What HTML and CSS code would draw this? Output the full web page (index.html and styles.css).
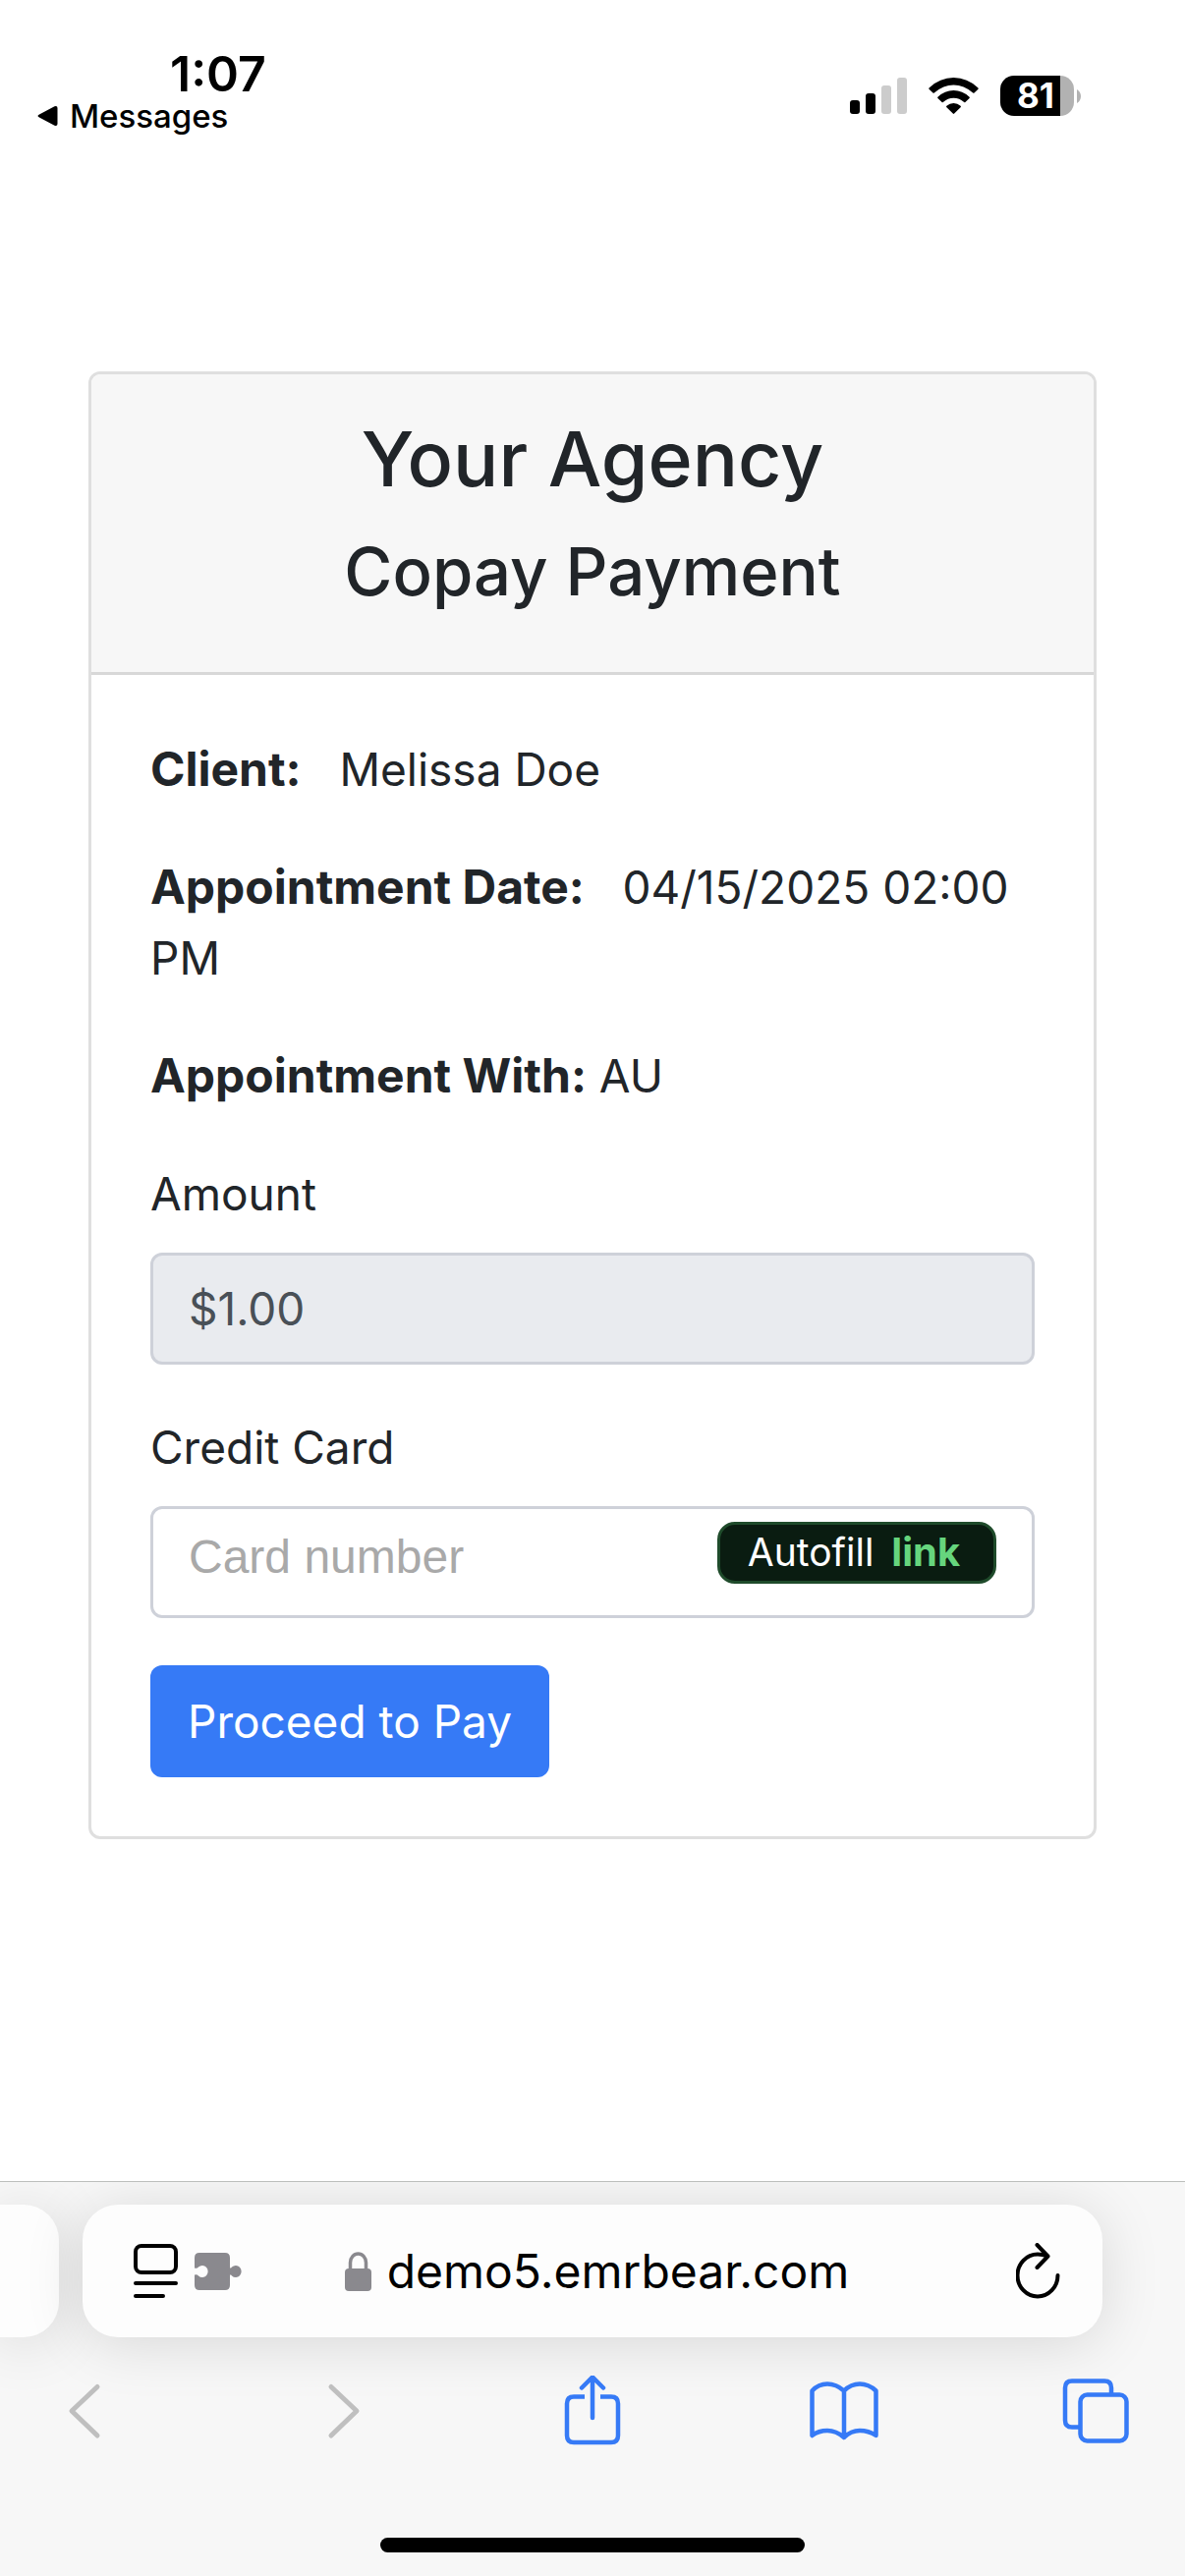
FILE: index.html
```html
<!DOCTYPE html>
<html lang="en">
<head>
<meta charset="utf-8">
<meta name="viewport" content="width=device-width, initial-scale=1">
<title>Copay Payment</title>
<link rel="stylesheet" href="styles.css">
</head>
<body>
<header class="status">
  <div class="status-left">
    <time class="clock">1:07</time>
    <a class="back-app" href="#messages">
      <svg width="21" height="22" viewBox="0 0 21 22" aria-hidden="true"><path d="M2 9.500 17.500 1.300Q20.500 0.300 20.500 3V19Q20.500 21.700 17.500 20.700L2 12.500Q-1 11 2 9.500Z"/></svg>
      Messages
    </a>
  </div>
  <div class="status-right">
    <svg width="58" height="41" viewBox="0 0 58 41" aria-hidden="true">
      <rect x="0" y="25" width="10" height="14" rx="3"/>
      <rect x="16" y="18" width="10" height="21" rx="3"/>
      <rect x="32" y="10" width="10" height="29" rx="3" fill="#ccc"/>
      <rect x="48" y="2" width="10" height="37" rx="3" fill="#ccc"/>
    </svg>
    <svg width="51" height="41" viewBox="0 0 51 41" aria-hidden="true">
      <path d="M0.500 12.500Q11.500 2 25.500 2T50.500 12.500Q51 13.200 50.500 13.800L46.500 17.600Q45.800 18 45.200 17.600Q36 9.600 25.500 9.600T5.800 17.600Q5.200 18 4.500 17.600L0.500 13.800Q0 13.200 0.500 12.500Z"/>
      <path d="M9.400 21.700Q16.500 15 25.500 15T41.600 21.700Q42.200 22.400 41.600 23L37.400 27Q36.800 27.400 36.200 27Q31.500 22.700 25.500 22.700T14.800 27Q14.200 27.400 13.600 27L9.400 23Q8.800 22.400 9.400 21.700Z"/>
      <path d="M18.400 30.800Q21.500 28 25.500 28T32.600 30.800Q33.400 31.500 32.600 32.300L26.200 38.600Q25.500 39.300 24.800 38.600L18.400 32.300Q17.600 31.500 18.400 30.800Z"/>
    </svg>
    <div class="battery">
      <span class="battery-level">81</span>
      <svg width="4" height="14" viewBox="0 0 4 14" aria-hidden="true"><path d="M0 0Q4 2.500 4 7T0 14Z" fill="#b2b2b2"/></svg>
    </div>
  </div>
</header>

<main class="page">
  <section class="card">
    <header class="card-header">
      <h1 class="agency">Your Agency</h1>
      <h2 class="subtitle">Copay Payment</h2>
    </header>
    <form class="card-body">
      <p class="detail"><b>Client:</b> &nbsp; Melissa Doe</p>
      <p class="detail"><b>Appointment Date:</b> &nbsp; 04/15/2025 02:00 PM</p>
      <p class="detail"><b>Appointment With:</b> AU</p>
      <div class="field">
        <label for="amount">Amount</label>
        <input class="control amount" id="amount" type="text" value="$1.00" readonly>
      </div>
      <div class="field">
        <label for="card-number">Credit Card</label>
        <div class="card-entry">
          <input class="control number" id="card-number" type="text" inputmode="numeric" placeholder="Card number">
          <button class="autofill" type="button">Autofill <span class="link-mark">link</span></button>
        </div>
      </div>
      <button class="pay" type="submit">Proceed to Pay</button>
    </form>
  </section>
</main>

<footer class="browser">
  <div class="tabs">
    <div class="tab-previous"></div>
    <div class="address">
      <div class="address-tools">
        <button class="icon" type="button" aria-label="Page menu">
          <svg width="46" height="56" viewBox="0 0 46 56" fill="none" stroke="#000" stroke-width="4" stroke-linecap="round"><rect x="2" y="2" width="41" height="27" rx="6"/><path d="M2 40H43M2 53H30"/></svg>
        </button>
        <button class="icon" type="button" aria-label="Extensions">
          <svg width="48" height="38" viewBox="0 0 48 38"><path fill="#8a898e" d="M5 0H31Q36 0 36 5V15.500Q37.500 15.800 38 14.500A5.800 6 0 1 1 38 23.500Q37.500 22.200 36 22.500V33Q36 38 31 38H5Q0 38 0 33V22.500Q2.500 21.500 4 23.500A5.800 6 0 1 0 4 14.500Q2.500 16.500 0 15.500V5Q0 0 5 0Z"/></svg>
        </button>
      </div>
      <div class="site">
        <svg width="27" height="40" viewBox="0 0 27 40" aria-hidden="true"><path d="M5.500 19V11A8 9 0 0 1 21.500 11V19" fill="none" stroke="#8a898e" stroke-width="3.500"/><rect y="17" width="27" height="23" rx="4" fill="#8a898e"/></svg>
        <span class="domain">demo5.emrbear.com</span>
      </div>
      <button class="icon reload" type="button" aria-label="Reload">
        <svg width="45" height="58" viewBox="0 0 45 58" fill="none" stroke="#000" stroke-width="4" stroke-linecap="round" stroke-linejoin="round"><path d="M42.500 33A20.500 21.500 0 1 1 22 11.500Q27 11.500 32 13.500M21.500 2 32.500 13.500 21.500 25"/></svg>
      </button>
    </div>
  </div>
  <nav class="toolbar">
    <button class="icon" type="button" aria-label="Back"><svg width="72" height="72" viewBox="0 0 72 72" fill="none" stroke="#bfbfbf" stroke-width="5" stroke-linecap="round" stroke-linejoin="round"><path d="M49 11.500 23 36 49 61" transform="translate(0 0)"/></svg></button>
    <button class="icon" type="button" aria-label="Forward"><svg width="72" height="72" viewBox="0 0 72 72" fill="none" stroke="#bfbfbf" stroke-width="5" stroke-linecap="round" stroke-linejoin="round"><path d="M29 11.500 55 36 29 61"/></svg></button>
    <button class="icon" type="button" aria-label="Share"><svg width="72" height="72" viewBox="0 0 72 72" fill="none" stroke="#367af6" stroke-width="4.500" stroke-linecap="round" stroke-linejoin="round"><path stroke-linecap="butt" d="M30 21.500H19Q12 21.500 12 28.500V61Q12 68 19 68H57Q64 68 64 61V28.500Q64 21.500 57 21.500H46"/><path d="M38 43V2M27 12.500 38 1.500 49 12.500"/></svg></button>
    <button class="icon" type="button" aria-label="Bookmarks"><svg width="72" height="72" viewBox="0 0 72 72" fill="none" stroke="#367af6" stroke-width="4.500" stroke-linecap="round" stroke-linejoin="round"><path d="M36 15.500V63Q28 56 19 56T3.500 61V15.500Q10 8.500 19 8.500T36 15.500Q43 8.500 52 8.500T68.500 15.500V61Q61 56 52 56T36 63"/></svg></button>
    <button class="icon" type="button" aria-label="Tabs"><svg width="72" height="72" viewBox="0 0 72 72" fill="none" stroke="#367af6" stroke-width="4.500"><path d="M19 52.500H11Q4 52.500 4 45.500V12.500Q4 5.500 11 5.500H44Q51 5.500 51 12.500V19"/><rect x="19.500" y="19.500" width="47" height="47" rx="7"/></svg></button>
  </nav>
  <div class="home-bar"></div>
</footer>
</body>
</html>
```
FILE: styles.css
```css
* {
  box-sizing: border-box;
}

body {
  display: flex;
  flex-direction: column;
  min-height: 100vh;
  margin: 0;
  background: #fff;
  color: #212529;
  font-family: Inter, "Liberation Sans", sans-serif;
  font-size: 46px;
  line-height: 72px;
}

svg {
  display: block;
  flex: none;
}

button,
input {
  margin: 0;
  font: inherit;
}

.icon {
  padding: 0;
  border: 0;
  background: none;
}

/* Status bar */
.status {
  display: flex;
  justify-content: space-between;
  align-items: flex-start;
  padding: 49px 106px 0 38px;
  color: #000;
}

.clock {
  display: block;
  padding-left: 135px;
  font-size: 50px;
  font-weight: 600;
  line-height: 52px;
}

.back-app {
  display: flex;
  align-items: center;
  gap: 12px;
  color: inherit;
  font-size: 33px;
  font-weight: 500;
  line-height: 34px;
  text-decoration: none;
}

.status-right {
  display: flex;
  gap: 22px;
  padding-top: 28px;
}

.battery {
  display: flex;
  align-items: center;
  gap: 3px;
}

.battery-level {
  width: 75px;
  padding-left: 17px;
  border-radius: 14px;
  background: linear-gradient(to right, #000 61px, #b2b2b2 61px);
  color: #fff;
  font-size: 35px;
  font-weight: 700;
  line-height: 41px;
}

/* Payment card */
.page {
  flex: 1;
  padding: 243px 90px 60px;
}

.card {
  border: 3px solid #dfdfdf;
  border-radius: 12px;
  overflow: hidden;
}

.card-header {
  padding: 36px 60px 59px;
  border-bottom: 3px solid #d8d8d8;
  background: #f7f7f7;
  text-align: center;
}

.agency,
.subtitle {
  margin: 0;
  font-weight: 500;
}

.agency {
  margin-bottom: 22px;
  font-size: 77px;
  line-height: 100px;
}

.subtitle {
  font-size: 67px;
  line-height: 86px;
}

.card-body {
  padding: 60px;
}

.detail {
  margin: 0 0 48px;
}

.detail b {
  font-size: 48px;
  line-height: 48px;
}

.field {
  margin-bottom: 48px;
}

.field label {
  display: block;
  margin-bottom: 24px;
}

.control {
  display: block;
  width: 100%;
  height: 114px;
  padding: 18px 36px;
  border: 3px solid #ced1d9;
  border-radius: 12px;
  background: #fff;
  color: #495057;
}

.amount {
  background: #e9ebef;
}

.card-entry {
  position: relative;
}

.number {
  padding: 12px 36px 24px;
  font-family: "Liberation Sans", Arial, sans-serif;
  font-size: 48px;
}

.number::placeholder {
  color: #a9a9a9;
  opacity: 1;
}

.autofill {
  position: absolute;
  top: 16px;
  right: 39px;
  display: flex;
  align-items: center;
  justify-content: center;
  gap: 18px;
  width: 284px;
  height: 63px;
  padding: 0 6px 2px 0;
  border: 3px solid #1f4b2b;
  border-radius: 18px;
  background: #0a1c11;
  color: #fff;
  font-size: 39px;
  line-height: 54px;
}

.link-mark {
  color: #66d57d;
  font-size: 40px;
  font-weight: 700;
}

.pay {
  display: block;
  height: 114px;
  padding: 0 38px;
  border: 0;
  border-radius: 12px;
  background: #367af6;
  color: #fff;
}

/* Browser controls */
.browser {
  padding: 23px 0 24px;
  border-top: 1px solid #bcbebc;
  background: #f7f7f7;
  overflow: hidden;
}

.tabs {
  display: flex;
  gap: 24px;
  padding-right: 84px;
}

.tab-previous,
.address {
  height: 135px;
  background: #fdfdfd;
  box-shadow: 0 6px 60px rgba(0, 0, 0, 0.13);
}

.tab-previous {
  width: 60px;
  border-radius: 0 36px 36px 0;
}

.address {
  display: grid;
  grid-template-columns: 1fr auto 1fr;
  align-items: center;
  flex: 1;
  padding: 0 43px 0 52px;
  border-radius: 36px;
}

.address-tools,
.site {
  display: flex;
  align-items: center;
  gap: 16px;
}

.domain {
  color: #000;
  font-size: 48px;
}

.reload {
  justify-self: end;
}

.toolbar {
  display: flex;
  justify-content: space-between;
  padding: 39px 54px 0 50px;
}

.home-bar {
  width: 432px;
  height: 15px;
  margin: 93px auto 0;
  border-radius: 8px;
  background: #000;
}
```
